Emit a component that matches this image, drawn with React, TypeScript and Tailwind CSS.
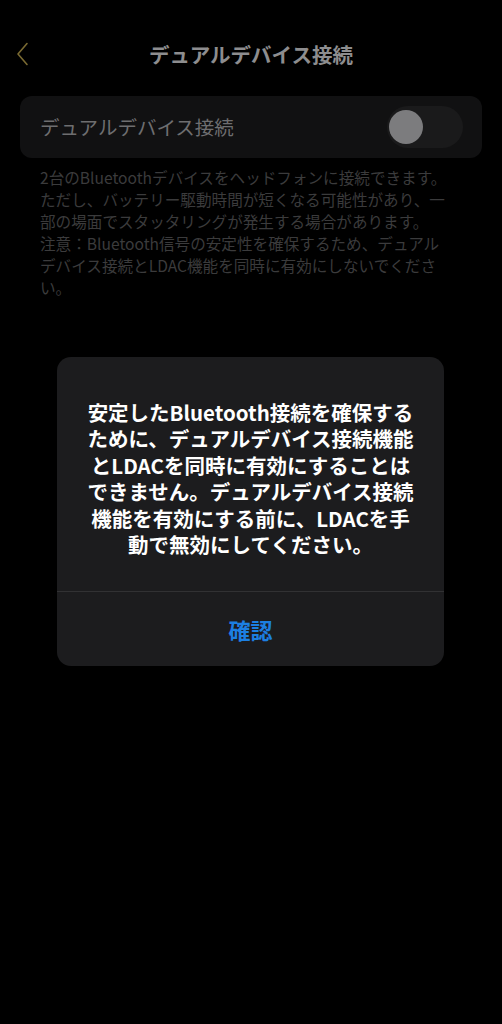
const FONT = { fontFamily: '"Noto Sans CJK JP", "Noto Sans", sans-serif' };

const DESCRIPTION = [
  "2台のBluetoothデバイスをヘッドフォンに接続できます。",
  "ただし、バッテリー駆動時間が短くなる可能性があり、一",
  "部の場面でスタッタリングが発生する場合があります。",
  "注意：Bluetooth信号の安定性を確保するため、デュアル",
  "デバイス接続とLDAC機能を同時に有効にしないでくださ",
  "い。",
];

const DIALOG = [
  "安定したBluetooth接続を確保する",
  "ために、デュアルデバイス接続機能",
  "とLDACを同時に有効にすることは",
  "できません。デュアルデバイス接続",
  "機能を有効にする前に、LDACを手",
  "動で無効にしてください。",
];

function Toggle() {
  return (
    <div className="flex h-[42px] w-[76px] items-center rounded-full bg-[#1a1a1b] px-[2px]">
      <div className="h-[34px] w-[34px] rounded-full bg-[#7c7c7e]" />
    </div>
  );
}

export default function App() {
  return (
    <div className="relative h-[1024px] w-[502px] overflow-hidden bg-black" style={FONT}>
      {/* header */}
      <div className="relative flex h-[106px] items-start pt-[40px]">
        <button className="absolute left-[16px] top-[42px] p-0">
          <svg width="13" height="24" viewBox="0 0 13 24" fill="none">
            <path d="M11 1.5L2 12l9 10.5" stroke="#7a6a32" strokeWidth="1.6" strokeLinecap="round" strokeLinejoin="round" />
          </svg>
        </button>
        <h1 className="w-full text-center text-[20.5px] font-bold leading-[28px] text-[#8d8d8f]">
          デュアルデバイス接続
        </h1>
      </div>

      <div className="-mt-[10px] px-[20px]">
        <div className="flex h-[62px] items-center justify-between rounded-[12px] bg-[#111112] pl-[20px] pr-[19px]">
          <span className="text-[19.5px] leading-none text-[#6e6e70]">デュアルデバイス接続</span>
          <Toggle />
        </div>
      </div>

      <div className="mt-[8px] px-[40px] text-[15.6px] leading-[22px] text-[#3b3b3c]">
        {DESCRIPTION.map((l) => (
          <div key={l} className="whitespace-nowrap">{l}</div>
        ))}
      </div>

      {/* dialog */}
      <div className="absolute left-[57px] top-[357px] w-[387px] overflow-hidden rounded-[14px] bg-[#1c1c1e]">
        <div className="flex flex-col items-center px-[20px] pb-[34px] pt-[42px] text-[20.5px] font-bold leading-[26.4px] text-white">
          {DIALOG.map((l) => (
            <div key={l} className="whitespace-nowrap">{l}</div>
          ))}
        </div>
        <div className="h-px bg-[#313133]" />
        <div className="flex h-[74px] items-center justify-center">
          <span className="text-[22px] font-bold text-[#1c7fe2]">確認</span>
        </div>
      </div>
    </div>
  );
}
